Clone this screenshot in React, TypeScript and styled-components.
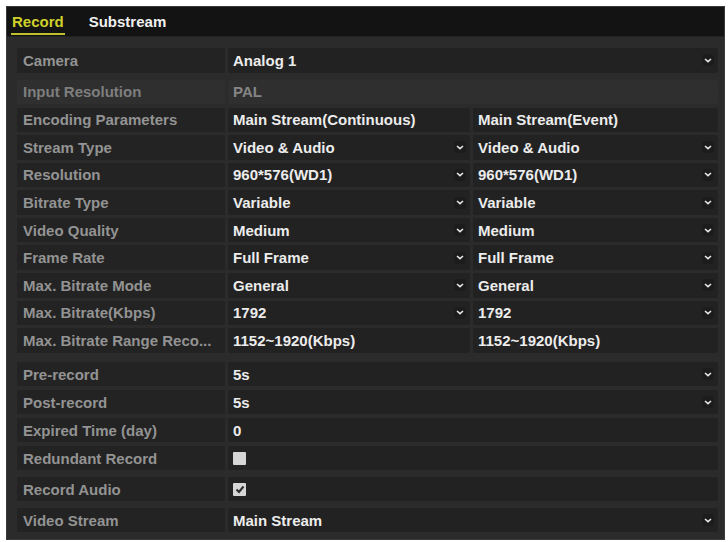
import styled, { createGlobalStyle } from 'styled-components';

const GlobalStyle = createGlobalStyle`
  html, body {
    margin: 0;
    padding: 0;
    background: #ffffff;
  }
  body {
    font-family: "Liberation Sans", Arial, sans-serif;
  }
`;

const Panel = styled.div`
  margin: 6px 3px 0 6px;
  width: 719px;
  height: 534px;
  box-sizing: border-box;
  background: #2b2b2b;
  border: 1px solid #3a3a3a;
  display: flex;
  flex-direction: column;
`;

const TabBar = styled.div`
  height: 29px;
  background: #131313;
  display: flex;
  align-items: flex-end;
  gap: 23px;
  padding: 0 0 0 4px;
  border-bottom: 1px solid #222;
`;

const Tab = styled.div<{ $active?: boolean }>`
  font-size: 15px;
  font-weight: bold;
  line-height: 18px;
  padding: 0 1px 2px 1px;
  margin-bottom: 1px;
  color: ${({ $active }) => ($active ? '#cfd02a' : '#f0f0f0')};
  border-bottom: 2px solid ${({ $active }) => ($active ? '#bfc02a' : 'transparent')};
`;

const Body = styled.div`
  flex: 1;
  padding: 11px 6px 0 10px;
  display: flex;
  flex-direction: column;
`;

const Group = styled.div<{ $gap: number; $rowGap?: number }>`
  display: flex;
  flex-direction: column;
  gap: ${({ $rowGap }) => $rowGap ?? 3}px;
  margin-top: ${({ $gap }) => $gap}px;
`;

const Row = styled.div`
  display: grid;
  grid-template-columns: 208px 242px 245px;
  column-gap: 3px;
  height: 24.5px;
`;

const Label = styled.div<{ $dim?: boolean }>`
  background: ${({ $dim }) => ($dim ? '#2f2f2f' : '#232323')};
  color: ${({ $dim }) => ($dim ? '#7e7e7e' : '#939393')};
  font-size: 15px;
  font-weight: bold;
  display: flex;
  align-items: center;
  padding-left: 6px;
  white-space: nowrap;
  overflow: hidden;
`;

const Cell = styled.div<{ $wide?: boolean; $dim?: boolean }>`
  grid-column: ${({ $wide }) => ($wide ? '2 / 4' : 'auto')};
  background: ${({ $dim }) => ($dim ? '#2f2f2f' : '#222222')};
  color: ${({ $dim }) => ($dim ? '#858585' : '#ececec')};
  font-size: 15px;
  font-weight: bold;
  display: flex;
  align-items: center;
  justify-content: space-between;
  padding: 0 4px 0 5px;
  border-radius: 2px;
  white-space: nowrap;
`;

const ArrowBox = styled.span`
  display: inline-flex;
  align-items: center;
  justify-content: center;
  width: 12px;
  height: 12px;
  border-radius: 4px;
  background: #1c1c1c;
`;

const Check = styled.span`
  width: 13px;
  height: 13px;
  background: #d6d6d6;
  border-radius: 1px;
  display: inline-flex;
  align-items: center;
  justify-content: center;
`;

const Arrow = () => (
  <ArrowBox>
    <svg width="8" height="5" viewBox="0 0 8 5">
      <path d="M1 1 L4 3.6 L7 1" fill="none" stroke="#e6e6e6" strokeWidth="1.6" />
    </svg>
  </ArrowBox>
);

const Checkbox = ({ checked }: { checked?: boolean }) => (
  <Check>
    {checked && (
      <svg width="10" height="9" viewBox="0 0 10 9">
        <path d="M1.5 4.5 L4 7 L8.5 1.5" fill="none" stroke="#2a2a2a" strokeWidth="2" />
      </svg>
    )}
  </Check>
);

type Dual = { label: string; a: string; b: string; select?: boolean };

const dualRows: Dual[] = [
  { label: 'Encoding Parameters', a: 'Main Stream(Continuous)', b: 'Main Stream(Event)' },
  { label: 'Stream Type', a: 'Video & Audio', b: 'Video & Audio', select: true },
  { label: 'Resolution', a: '960*576(WD1)', b: '960*576(WD1)', select: true },
  { label: 'Bitrate Type', a: 'Variable', b: 'Variable', select: true },
  { label: 'Video Quality', a: 'Medium', b: 'Medium', select: true },
  { label: 'Frame Rate', a: 'Full Frame', b: 'Full Frame', select: true },
  { label: 'Max. Bitrate Mode', a: 'General', b: 'General', select: true },
  { label: 'Max. Bitrate(Kbps)', a: '1792', b: '1792', select: true },
  { label: 'Max. Bitrate Range Reco...', a: '1152~1920(Kbps)', b: '1152~1920(Kbps)' },
];

const App = () => {
  return (
    <>
      <GlobalStyle />
      <Panel>
        <TabBar>
          <Tab $active>Record</Tab>
          <Tab>Substream</Tab>
        </TabBar>
        <Body>
          <Group $gap={0}>
            <Row>
              <Label>Camera</Label>
              <Cell $wide>
                Analog 1<Arrow />
              </Cell>
            </Row>
          </Group>

          <Group $gap={7}>
            <Row>
              <Label $dim>Input Resolution</Label>
              <Cell $wide $dim>PAL</Cell>
            </Row>
          </Group>

          <Group $gap={3.5} $rowGap={3.1}>
            {dualRows.map((r) => (
              <Row key={r.label}>
                <Label>{r.label}</Label>
                <Cell>
                  {r.a}
                  {r.select && <Arrow />}
                </Cell>
                <Cell>
                  {r.b}
                  {r.select && <Arrow />}
                </Cell>
              </Row>
            ))}
          </Group>

          <Group $gap={9} $rowGap={3.5}>
            <Row>
              <Label>Pre-record</Label>
              <Cell $wide>
                5s<Arrow />
              </Cell>
            </Row>
            <Row>
              <Label>Post-record</Label>
              <Cell $wide>
                5s<Arrow />
              </Cell>
            </Row>
            <Row>
              <Label>Expired Time (day)</Label>
              <Cell $wide>0</Cell>
            </Row>
            <Row>
              <Label>Redundant Record</Label>
              <Cell $wide>
                <Checkbox />
              </Cell>
            </Row>
          </Group>

          <Group $gap={6.5}>
            <Row>
              <Label>Record Audio</Label>
              <Cell $wide>
                <Checkbox checked />
              </Cell>
            </Row>
          </Group>

          <Group $gap={6.5}>
            <Row>
              <Label>Video Stream</Label>
              <Cell $wide>
                Main Stream<Arrow />
              </Cell>
            </Row>
          </Group>
        </Body>
      </Panel>
    </>
  );
};

export default App;
